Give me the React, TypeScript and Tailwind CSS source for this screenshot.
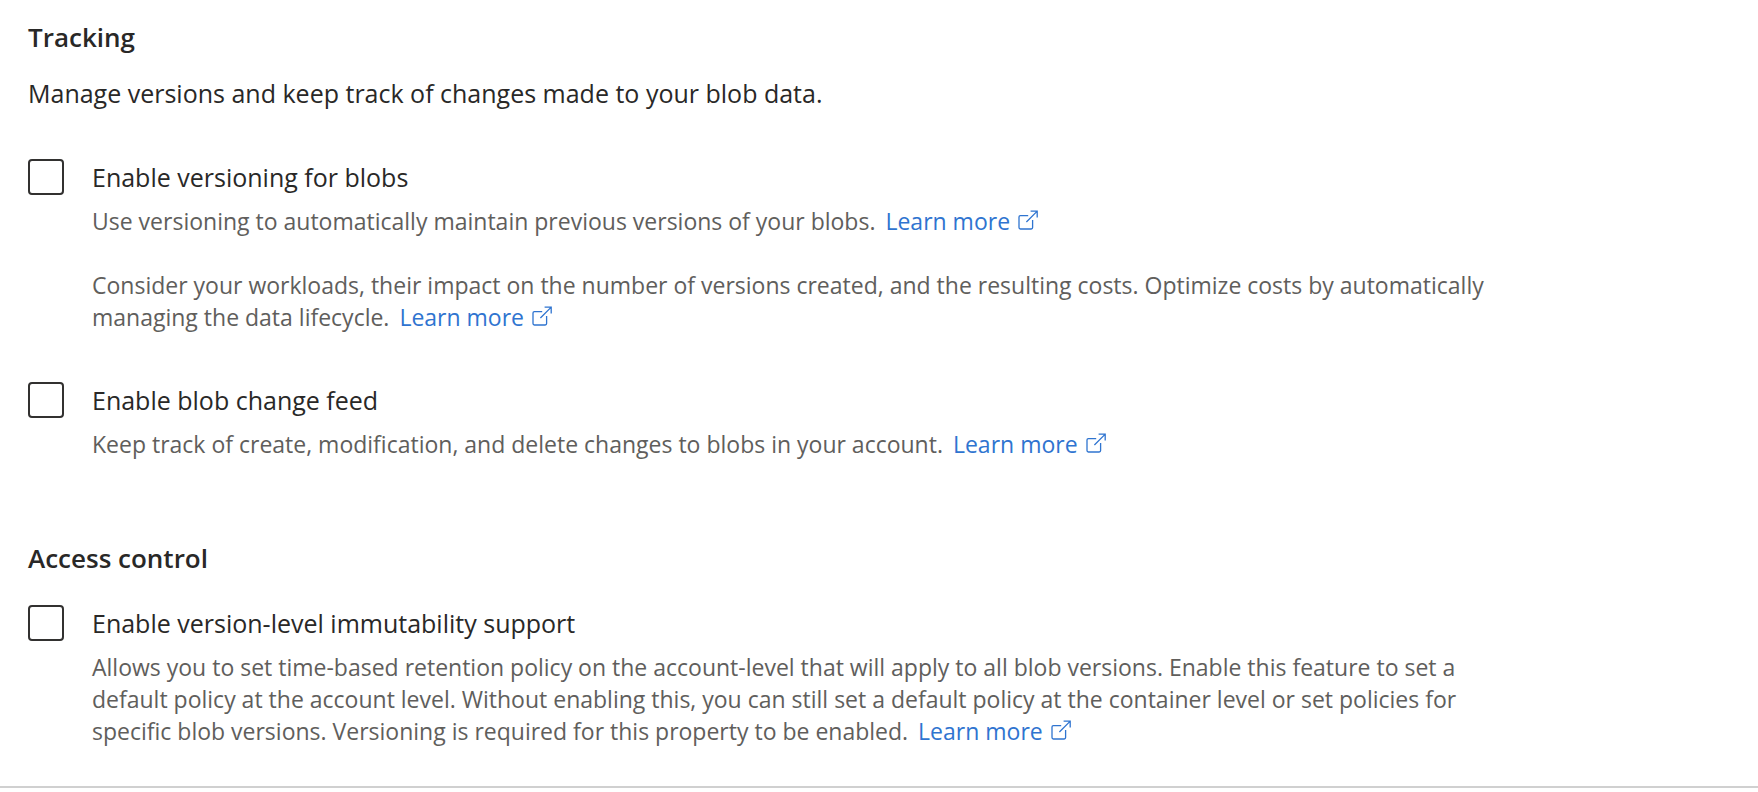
import { useId, type ReactNode } from "react";

function ExternalIcon() {
  return (
    <svg
      className="inline-block h-5 w-5 ml-2 align-baseline"
      viewBox="0 0 20 20"
      fill="none"
      stroke="currentColor"
      strokeWidth="1.3"
      aria-hidden="true"
    >
      <path d="M10.2 5.6H2.4A1.4 1.4 0 0 0 1 7v10.6A1.4 1.4 0 0 0 2.4 19h10.8a1.4 1.4 0 0 0 1.4-1.4V10" />
      <path d="M8.4 12 19 1.4M12.6 1.2h6.6v6.4" />
    </svg>
  );
}

function LearnMore() {
  return (
    <a href="#" className="ml-1 whitespace-nowrap text-[#2f74d0] hover:underline">
      Learn more
      <ExternalIcon />
    </a>
  );
}

function SectionTitle({ children }: { children: ReactNode }) {
  return <h2 className="text-[26px] leading-9 font-semibold">{children}</h2>;
}

function Option({ label, children }: { label: string; children: ReactNode }) {
  const id = useId();
  return (
    <div className="flex items-start gap-7">
      <input
        id={id}
        type="checkbox"
        className="h-9 w-9 shrink-0 appearance-none rounded border-2 border-[#323130] bg-white checked:bg-[#2f74d0]"
      />
      <div>
        <label htmlFor={id} className="block text-[25px] leading-9">
          {label}
        </label>
        <div className="mt-2.5 max-w-[1410px] space-y-8 text-[23px] leading-8 text-[#605e5c]">
          {children}
        </div>
      </div>
    </div>
  );
}

export default function App() {
  return (
    <main className="border-b-2 border-[#d0d0d0] bg-white px-7 pt-[19px] pb-[39px] font-['Segoe_UI','Open_Sans',sans-serif] text-[#292827]">
      {/* Tracking */}
      <section>
        <SectionTitle>Tracking</SectionTitle>
        <p className="mt-5 text-[25px] leading-9">
          Manage versions and keep track of changes made to your blob data.
        </p>
        <div className="mt-12 space-y-[49px]">
          <Option label="Enable versioning for blobs">
            <p>
              Use versioning to automatically maintain previous versions of your blobs. <LearnMore />
            </p>
            <p>
              Consider your workloads, their impact on the number of versions created, and the
              resulting costs. Optimize costs by automatically managing the data lifecycle.{" "}
              <LearnMore />
            </p>
          </Option>
          <Option label="Enable blob change feed">
            <p>
              Keep track of create, modification, and delete changes to blobs in your account.{" "}
              <LearnMore />
            </p>
          </Option>
        </div>
      </section>

      {/* Access control */}
      <section className="mt-20">
        <SectionTitle>Access control</SectionTitle>
        <div className="mt-[29px]">
          <Option label="Enable version-level immutability support">
            <p>
              Allows you to set time-based retention policy on the account-level that will apply to
              all blob versions. Enable this feature to set a default policy at the account level.
              Without enabling this, you can still set a default policy at the container level or
              set policies for specific blob versions. Versioning is required for this property to
              be enabled. <LearnMore />
            </p>
          </Option>
        </div>
      </section>
    </main>
  );
}
